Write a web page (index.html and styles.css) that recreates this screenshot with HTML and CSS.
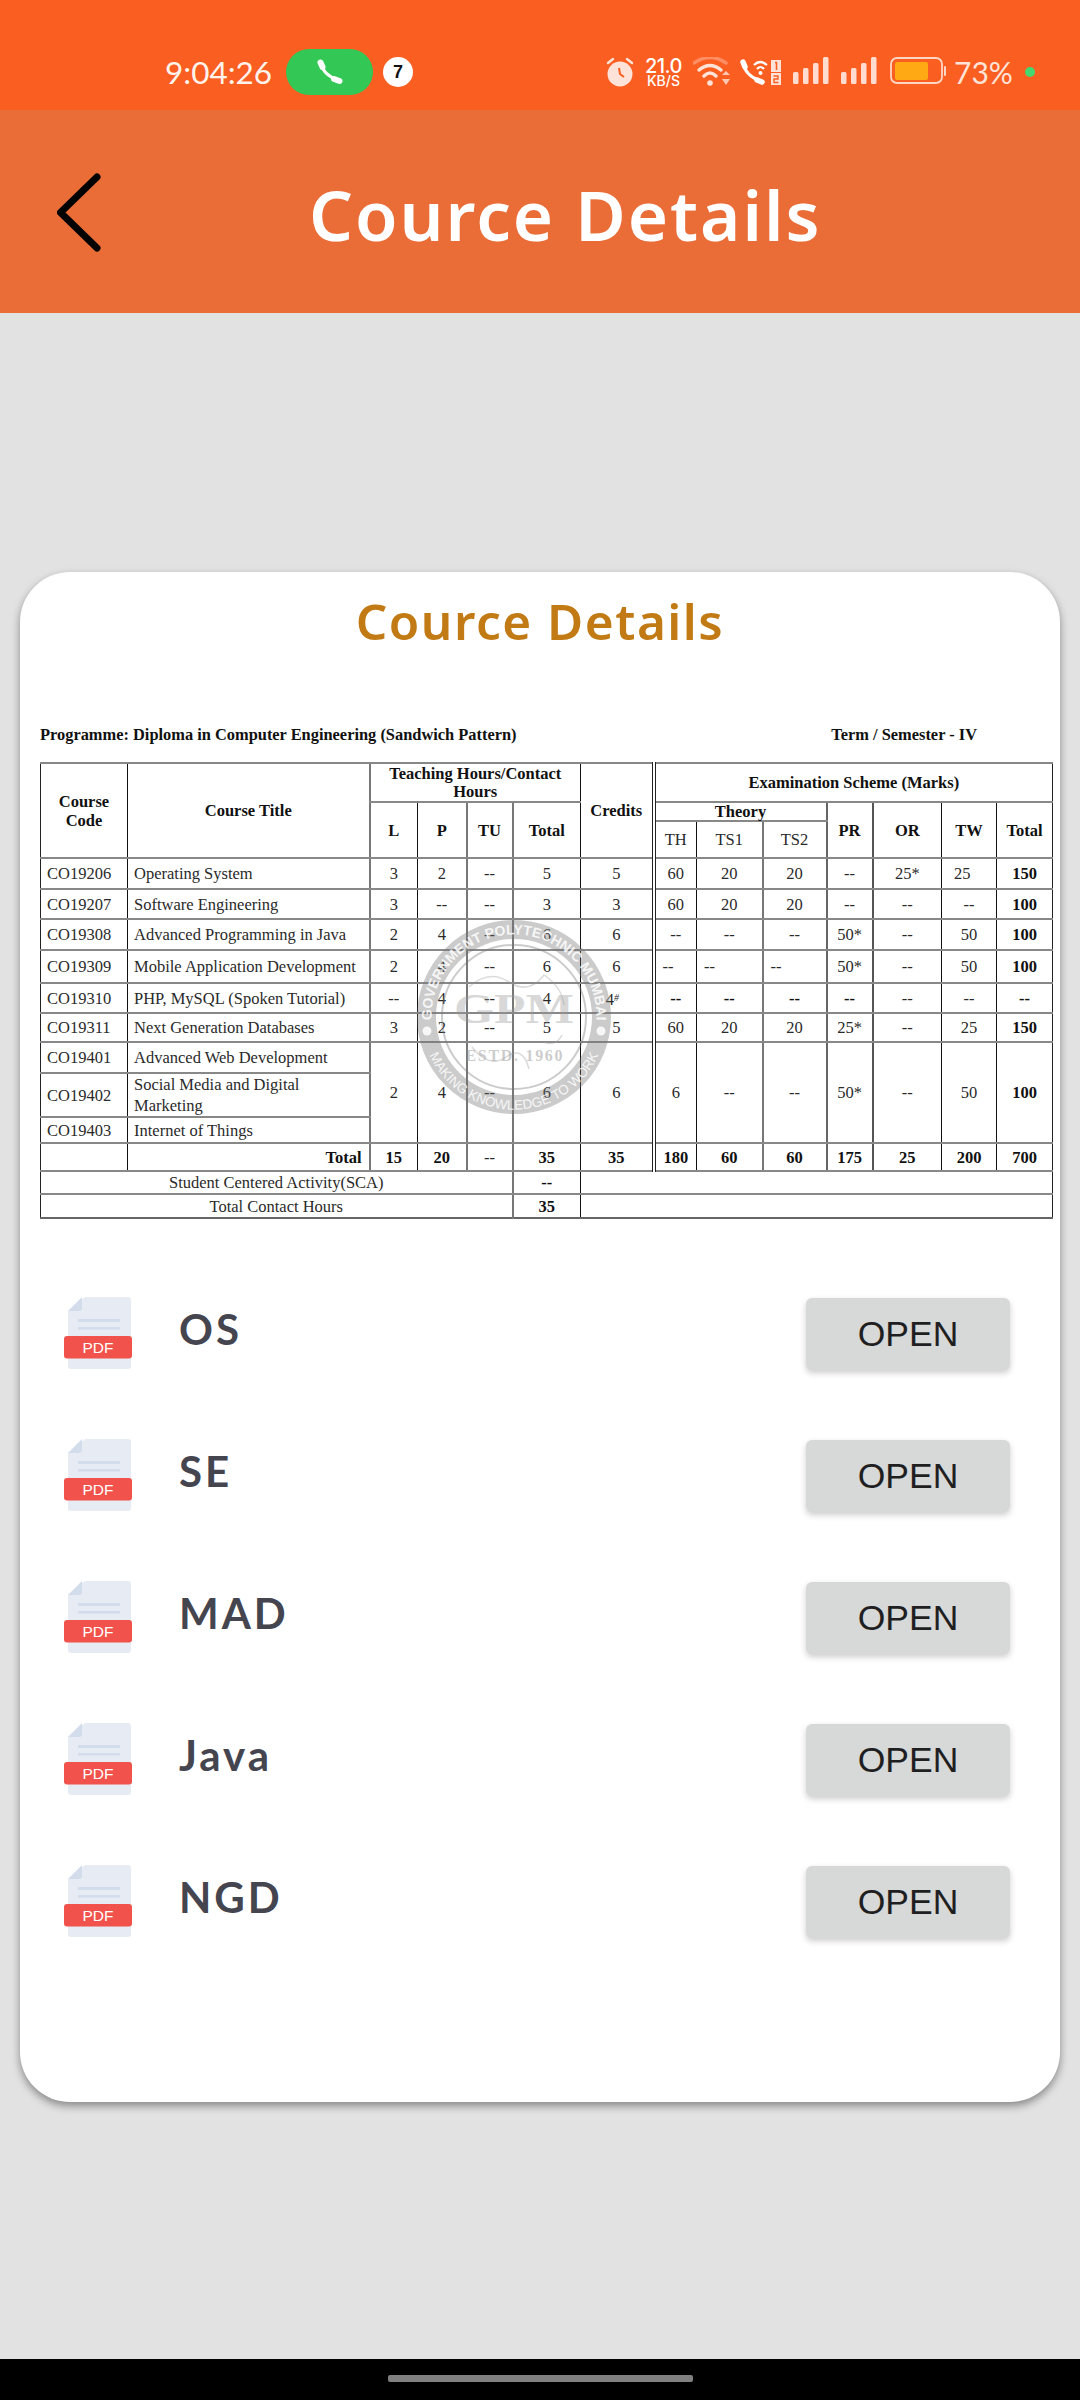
FILE: index.html
```html
<!DOCTYPE html>
<html lang="en">
<head>
<meta charset="utf-8">
<title>Cource Details</title>
<link rel="stylesheet" href="styles.css">
</head>
<body>
<div class="status">
  <div class="status-left">
    <span class="time">9:04:26</span>
    <span class="call-pill">
      <svg class="call-icon" viewBox="0 0 26 26"><path d="M4 4Q6 16 21 21" fill="none" stroke="#fff" stroke-width="3"/><path d="M3.500 3.500L5.500 8M17 20L22.500 22" fill="none" stroke="#fff" stroke-width="6" stroke-linecap="round"/></svg>
    </span>
    <span class="badge">7</span>
  </div>
  <div class="status-right">
    <svg class="alarm" viewBox="0 0 28 30"><circle cx="14" cy="17" r="12.500" fill="#ffe3d8"/><path d="M2 6L7 2M26 6L21 2" stroke="#ffe3d8" stroke-width="2.500" stroke-linecap="round"/><path d="M13 11L14 17L18 20" fill="none" stroke="#fa5e20" stroke-width="2"/></svg>
    <span class="speed"><span class="speed-num">21.0</span><span class="speed-unit">KB/S</span></span>
    <svg class="wifi" viewBox="0 0 38 29"><path d="M1 6Q17 -5 33 6" fill="none" stroke="#ff8d63" stroke-width="3.500" stroke-linecap="round"/><path d="M6 13Q17 4 28 13M11 19Q17 13 23 19" fill="none" stroke="#ffe3d8" stroke-width="3.500" stroke-linecap="round"/><circle cx="17" cy="26" r="2.800" fill="#ffe3d8"/><path d="M29 18L33 14L37 18ZM29 22L37 22L33 28Z" fill="#ffc8b3"/></svg>
    <svg class="volte" viewBox="0 0 41 26"><path d="M3 4Q5 16 20 22" fill="none" stroke="#fff" stroke-width="3"/><path d="M3 3L5 8M17 21L22 23" fill="none" stroke="#fff" stroke-width="5.500" stroke-linecap="round"/><path d="M14 6Q20 0 27 6M17 10Q20.500 6 24 10" fill="none" stroke="#fff" stroke-width="2.200"/><circle cx="20.500" cy="14" r="2" fill="#fff"/><rect x="31" y="1" width="10" height="12" fill="#ffe3d8"/><rect x="31" y="14" width="10" height="12" fill="#ffe3d8"/><path d="M35 3.500H36.500V11" fill="none" stroke="#fa5e20" stroke-width="1.600"/><path d="M33.500 17H38V20H34V23.500H38.500" fill="none" stroke="#fa5e20" stroke-width="1.400"/></svg>
    <svg class="signal" viewBox="0 0 36 28"><rect y="15" width="5.500" height="12" rx="1.500"/><rect x="10" y="11" width="5.500" height="16" rx="1.500"/><rect x="20" y="6" width="5.500" height="21" rx="1.500"/><rect x="30" y="0" width="5.500" height="27" rx="1.500"/></svg>
    <svg class="signal signal-b" viewBox="0 0 36 28"><rect y="15" width="5.500" height="12" rx="1.500"/><rect x="10" y="11" width="5.500" height="16" rx="1.500"/><rect x="20" y="6" width="5.500" height="21" rx="1.500"/><rect x="30" y="0" width="5.500" height="27" rx="1.500"/></svg>
    <svg class="battery" viewBox="0 0 56 28"><rect x="1" y="1" width="51" height="25" rx="6" fill="none" stroke="#ffd5c4" stroke-width="1.800"/><rect x="5" y="5" width="33" height="18" rx="2" fill="#ffa914"/><rect x="54" y="9" width="2" height="10" rx="1" fill="#ffd5c4"/></svg>
    <span class="pct">73%</span>
    <span class="dot"></span>
  </div>
</div>

<header class="appbar">
  <svg class="back" viewBox="0 0 46 80"><path d="M40 5L3.500 40.500L40 76" fill="none" stroke="#000" stroke-width="7" stroke-linecap="round" stroke-linejoin="round"/></svg>
  <h1 class="appbar-title">Cource Details</h1>
</header>

<main class="main">
  <section class="card">
    <h2 class="card-title">Cource Details</h2>
    <div class="sheet">
      <div class="sheet-head">
        <span>Programme: Diploma in Computer Engineering (Sandwich Pattern)</span>
        <span class="term">Term / Semester - IV</span>
      </div>
      <div class="sheet-body">
        <table class="scheme">
          <colgroup>
            <col class="c1"><col class="c2"><col class="c3"><col class="c4"><col class="c5"><col class="c6"><col class="c7"><col class="c8"><col class="c9"><col class="c10"><col class="c11"><col class="c12"><col class="c13"><col class="c14">
          </colgroup>
          <tr class="h39">
            <th rowspan="3">Course<br>Code</th>
            <th rowspan="3">Course Title</th>
            <th colspan="4" class="tight">Teaching Hours/Contact<br>Hours</th>
            <th rowspan="3">Credits</th>
            <th colspan="7">Examination Scheme (Marks)</th>
          </tr>
          <tr class="h19">
            <th rowspan="2">L</th><th rowspan="2">P</th><th rowspan="2">TU</th><th rowspan="2">Total</th>
            <th colspan="3" class="flat">Theory</th>
            <th rowspan="2">PR</th><th rowspan="2">OR</th><th rowspan="2">TW</th><th rowspan="2">Total</th>
          </tr>
          <tr class="h37">
            <td>TH</td><td>TS1</td><td>TS2</td>
          </tr>
          <tr class="h31">
            <td class="code">CO19206</td><td class="name">Operating System</td><td>3</td><td>2</td><td>--</td><td>5</td><td>5</td><td>60</td><td>20</td><td>20</td><td>--</td><td>25*</td><td class="shift">25</td><td class="b">150</td>
          </tr>
          <tr class="h30">
            <td class="code">CO19207</td><td class="name">Software Engineering</td><td>3</td><td>--</td><td>--</td><td>3</td><td>3</td><td>60</td><td>20</td><td>20</td><td>--</td><td>--</td><td>--</td><td class="b">100</td>
          </tr>
          <tr class="h31">
            <td class="code">CO19308</td><td class="name">Advanced Programming in Java</td><td>2</td><td>4</td><td>--</td><td>6</td><td>6</td><td>--</td><td>--</td><td>--</td><td>50*</td><td>--</td><td>50</td><td class="b">100</td>
          </tr>
          <tr class="h33">
            <td class="code">CO19309</td><td class="name">Mobile Application Development</td><td>2</td><td>4</td><td>--</td><td>6</td><td>6</td><td class="left">--</td><td class="left">--</td><td class="left">--</td><td>50*</td><td>--</td><td>50</td><td class="b">100</td>
          </tr>
          <tr class="h30">
            <td class="code">CO19310</td><td class="name">PHP, MySQL (Spoken Tutorial)</td><td>--</td><td>4</td><td>--</td><td>4</td><td class="four">4<i class="hash">#</i></td><td class="b">--</td><td class="b">--</td><td class="b">--</td><td class="b">--</td><td>--</td><td>--</td><td class="b">--</td>
          </tr>
          <tr class="h29">
            <td class="code">CO19311</td><td class="name">Next Generation Databases</td><td>3</td><td>2</td><td>--</td><td>5</td><td>5</td><td>60</td><td>20</td><td>20</td><td>25*</td><td>--</td><td>25</td><td class="b">150</td>
          </tr>
          <tr class="h31">
            <td class="code">CO19401</td><td class="name">Advanced Web Development</td><td rowspan="3">2</td><td rowspan="3">4</td><td rowspan="3">--</td><td rowspan="3">6</td><td rowspan="3">6</td><td rowspan="3">6</td><td rowspan="3">--</td><td rowspan="3">--</td><td rowspan="3">50*</td><td rowspan="3">--</td><td rowspan="3">50</td><td rowspan="3" class="b">100</td>
          </tr>
          <tr class="h44">
            <td class="code">CO19402</td><td class="name two">Social Media and Digital<br>Marketing</td>
          </tr>
          <tr class="h26">
            <td class="code">CO19403</td><td class="name">Internet of Things</td>
          </tr>
          <tr class="h28">
            <td></td><td class="total b">Total</td><td class="b">15</td><td class="b">20</td><td>--</td><td class="b">35</td><td class="b">35</td><td class="b">180</td><td class="b">60</td><td class="b">60</td><td class="b">175</td><td class="b">25</td><td class="b">200</td><td class="b">700</td>
          </tr>
          <tr class="h23">
            <td colspan="5">Student Centered Activity(SCA)</td><td class="b">--</td><td colspan="8"></td>
          </tr>
          <tr class="h24">
            <td colspan="5">Total Contact Hours</td><td class="b">35</td><td colspan="8"></td>
          </tr>
        </table>
        <svg class="seal" viewBox="-97 -97 194 194">
          <defs>
            <path id="seal-top" d="M-82 8A82.400 82.400 0 1 1 82 8"/>
            <path id="seal-bot" d="M-87 32A92.700 92.700 0 0 0 87 32"/>
          </defs>
          <circle r="87.500" fill="none" stroke="#777" stroke-opacity=".38" stroke-width="19"/>
          <circle r="72" fill="none" stroke="#777" stroke-opacity=".38" stroke-width="2"/>
          <circle cx="-87" cy="14" r="4.500" fill="#fff" fill-opacity=".85"/>
          <circle cx="87" cy="14" r="4.500" fill="#fff" fill-opacity=".85"/>
          <text class="seal-ring"><textPath href="#seal-top" startOffset="50%" text-anchor="middle">GOVERNMENT POLYTECHNIC MUMBAI</textPath></text>
          <text class="seal-ring seal-ring-b"><textPath href="#seal-bot" startOffset="50%" text-anchor="middle">MAKING KNOWLEDGE TO WORK</textPath></text>
          <path d="M-45 -30Q-25 -48 -5 -35T30 -42Q48 -30 50 -12M-42 30Q-25 52 -8 40T15 52M30 25Q42 30 48 18" fill="none" stroke="#999" stroke-opacity=".35" stroke-width="1.500"/>
          <text class="seal-gpm" x="0" y="6" text-anchor="middle" textLength="120" lengthAdjust="spacingAndGlyphs">GPM</text>
          <text class="seal-estd" x="0" y="44" text-anchor="middle" textLength="97">ESTD. 1960</text>
        </svg>
      </div>
    </div>

    <ul class="files">
      <li class="file">
        <svg class="pdf" viewBox="0 0 68 72"><path d="M21 0H64A3 3 0 0 1 67 3V69A3 3 0 0 1 64 72H7A3 3 0 0 1 4 69V14Z" fill="#e7ebf3"/><path d="M18 0V11A3 3 0 0 1 15 14H4Z" fill="#d3dcea"/><rect x="14" y="22" width="42" height="3" fill="#d3dcea"/><rect x="14" y="30" width="42" height="2.500" fill="#d3dcea"/><rect x="0" y="39" width="68" height="22.500" rx="3" fill="#f1524c"/><text class="pdf-label" x="34" y="56" text-anchor="middle">PDF</text></svg>
        <span class="file-name">OS</span>
        <button class="open">OPEN</button>
      </li>
      <li class="file">
        <svg class="pdf" viewBox="0 0 68 72"><path d="M21 0H64A3 3 0 0 1 67 3V69A3 3 0 0 1 64 72H7A3 3 0 0 1 4 69V14Z" fill="#e7ebf3"/><path d="M18 0V11A3 3 0 0 1 15 14H4Z" fill="#d3dcea"/><rect x="14" y="22" width="42" height="3" fill="#d3dcea"/><rect x="14" y="30" width="42" height="2.500" fill="#d3dcea"/><rect x="0" y="39" width="68" height="22.500" rx="3" fill="#f1524c"/><text class="pdf-label" x="34" y="56" text-anchor="middle">PDF</text></svg>
        <span class="file-name">SE</span>
        <button class="open">OPEN</button>
      </li>
      <li class="file">
        <svg class="pdf" viewBox="0 0 68 72"><path d="M21 0H64A3 3 0 0 1 67 3V69A3 3 0 0 1 64 72H7A3 3 0 0 1 4 69V14Z" fill="#e7ebf3"/><path d="M18 0V11A3 3 0 0 1 15 14H4Z" fill="#d3dcea"/><rect x="14" y="22" width="42" height="3" fill="#d3dcea"/><rect x="14" y="30" width="42" height="2.500" fill="#d3dcea"/><rect x="0" y="39" width="68" height="22.500" rx="3" fill="#f1524c"/><text class="pdf-label" x="34" y="56" text-anchor="middle">PDF</text></svg>
        <span class="file-name">MAD</span>
        <button class="open">OPEN</button>
      </li>
      <li class="file">
        <svg class="pdf" viewBox="0 0 68 72"><path d="M21 0H64A3 3 0 0 1 67 3V69A3 3 0 0 1 64 72H7A3 3 0 0 1 4 69V14Z" fill="#e7ebf3"/><path d="M18 0V11A3 3 0 0 1 15 14H4Z" fill="#d3dcea"/><rect x="14" y="22" width="42" height="3" fill="#d3dcea"/><rect x="14" y="30" width="42" height="2.500" fill="#d3dcea"/><rect x="0" y="39" width="68" height="22.500" rx="3" fill="#f1524c"/><text class="pdf-label" x="34" y="56" text-anchor="middle">PDF</text></svg>
        <span class="file-name">Java</span>
        <button class="open">OPEN</button>
      </li>
      <li class="file">
        <svg class="pdf" viewBox="0 0 68 72"><path d="M21 0H64A3 3 0 0 1 67 3V69A3 3 0 0 1 64 72H7A3 3 0 0 1 4 69V14Z" fill="#e7ebf3"/><path d="M18 0V11A3 3 0 0 1 15 14H4Z" fill="#d3dcea"/><rect x="14" y="22" width="42" height="3" fill="#d3dcea"/><rect x="14" y="30" width="42" height="2.500" fill="#d3dcea"/><rect x="0" y="39" width="68" height="22.500" rx="3" fill="#f1524c"/><text class="pdf-label" x="34" y="56" text-anchor="middle">PDF</text></svg>
        <span class="file-name">NGD</span>
        <button class="open">OPEN</button>
      </li>
    </ul>
  </section>
</main>

<footer class="navbar"><span class="home-pill"></span></footer>
</body>
</html>
```

FILE: styles.css
```css
* { box-sizing: border-box; }
html, body { margin: 0; padding: 0; }
body {
  width: 1080px;
  height: 2400px;
  overflow: hidden;
  display: flex;
  flex-direction: column;
  background: #e2e2e2;
  font-family: "Noto Sans", sans-serif;
}

/* status bar */
.status {
  height: 110px;
  flex: none;
  background: #fa5e20;
  display: flex;
  align-items: flex-start;
  justify-content: space-between;
  padding: 49px 45px 0 165px;
}
.status-left { display: flex; align-items: center; height: 46px; }
.time { font: 400 31.500px/46px "Lato", sans-serif; color: #fff3ec; width: 121px; }
.call-pill {
  width: 87px; height: 46px; border-radius: 23px; background: #33c756;
  display: flex; align-items: center; justify-content: center;
}
.call-icon { width: 26px; height: 26px; }
.badge {
  width: 30px; height: 30px; border-radius: 50%; background: #fff; margin-left: 10px;
  display: flex; align-items: center; justify-content: center;
  font: 700 18px/30px "Liberation Sans", sans-serif; color: #111;
}
.status-right { display: flex; align-items: flex-start; height: 46px; padding-top: 8px; }
.alarm { width: 28px; height: 30px; margin-right: 10px; }
.speed { display: flex; flex-direction: column; align-items: center; width: 39px; margin-right: 10px; color: #fff; }
.speed-num { font: 500 20px/18px "Inter", sans-serif; letter-spacing: -.5px; }
.speed-unit { font: 500 14px/12px "Inter", sans-serif; }
.wifi { width: 38px; height: 29px; margin-right: 9px; }
.volte { width: 41px; height: 26px; margin: 2px 12px 0 0; }
.signal { width: 36px; height: 28px; fill: #ffdccf; margin-right: 12px; }
.signal-b { margin-right: 13px; }
.battery { width: 56px; height: 28px; margin-right: 8px; }
.pct { font: 400 30px/30px "Lato", sans-serif; color: #ffe3d8; width: 60px; }
.dot { width: 10px; height: 10px; border-radius: 50%; background: #45d870; margin: 10px 0 0 11px; }

/* app bar */
.appbar {
  height: 203px;
  flex: none;
  background: #ea6c36;
  display: flex;
  align-items: center;
  padding-left: 57px;
}
.back { width: 46px; height: 80px; flex: none; }
.appbar-title {
  margin: 0 0 0 206px;
  padding-top: 4px;
  font-size: 69px;
  line-height: 80px;
  font-weight: 600;
  letter-spacing: 2px;
  color: #fff;
}

/* card */
.main { flex: 1; padding: 259px 20px 0; }
.card {
  height: 1530px;
  background: #fff;
  border-radius: 50px;
  box-shadow: 0 4px 8px rgba(0, 0, 0, .4);
  display: flex;
  flex-direction: column;
}
.card-title {
  margin: 0;
  height: 98px;
  text-align: center;
  font-size: 49.500px;
  line-height: 98px;
  font-weight: 600;
  letter-spacing: 1.500px;
  color: #c27a14;
}

/* timetable */
.sheet { margin: 55px 0 0 20px; width: 1012px; }
.sheet-head {
  height: 37px;
  display: flex;
  justify-content: space-between;
  font: 700 16.400px/20px "Liberation Serif", serif;
  color: #111;
}
.term { margin-right: 75px; }
.sheet-body { position: relative; }
.scheme {
  width: 1012px;
  table-layout: fixed;
  border-collapse: collapse;
  border-left: 1.500px solid #222;
  border-right: 1.500px solid #222;
  border-bottom: 2px solid #666;
  font: 400 16.500px/19px "Liberation Serif", serif;
  color: #2a2a2a;
}
.scheme th, .scheme td {
  padding: 0;
  text-align: center;
  vertical-align: middle;
  border-top: 2px solid #888;
}
.scheme th { font-weight: 700; color: #111; }
.scheme .tight { line-height: 18px; }
.scheme .flat { line-height: 16px; }
.c1 { width: 87px; }
.c2 { width: 242px; border-left: 1.500px solid #111; }
.c3 { width: 48px; border-left: 2px solid #777; }
.c4 { width: 49px; border-left: 1.500px solid #111; }
.c5 { width: 46px; border-left: 2px solid #777; }
.c6 { width: 68px; border-left: 2px solid #777; }
.c7 { width: 73px; border-left: 1.500px solid #111; }
.c8 { width: 43px; border-left: 4px double #222; }
.c9 { width: 66px; border-left: 1.500px solid #111; }
.c10 { width: 64px; border-left: 2px solid #777; }
.c11 { width: 46px; border-left: 2px solid #666; }
.c12 { width: 69px; border-left: 2px solid #555; }
.c13 { width: 55px; border-left: 1.500px solid #111; }
.c14 { width: 56px; border-left: 1.500px solid #111; }
.h19 { height: 19px; }
.h23 { height: 23px; }
.h24 { height: 24px; }
.h26 { height: 26px; }
.h28 { height: 28px; }
.h29 { height: 29px; }
.h30 { height: 30px; }
.h31 { height: 31px; }
.h33 { height: 33px; }
.h37 { height: 37px; }
.h39 { height: 39px; }
.h44 { height: 44px; }
.scheme .code, .scheme .name { text-align: left; padding-left: 6px; }
.scheme .two { line-height: 21px; }
.scheme .total { text-align: right; padding-right: 7px; }
.scheme .b { font-weight: 700; color: #111; }
.scheme .left { text-align: left; padding-left: 7px; }
.scheme .shift { text-align: left; padding-left: 12px; }
.scheme .four { padding-right: 8px; }
.hash { font-size: 10px; vertical-align: 4px; }

/* watermark */
.seal { position: absolute; left: 377px; top: 158px; width: 194px; height: 194px; }
.seal-ring { font: 700 14px "Liberation Sans", sans-serif; fill: #fff; fill-opacity: .85; }
.seal-ring-b { font-weight: 400; font-size: 13.500px; }
.seal-gpm { font: 700 42px "Liberation Serif", serif; fill: #999; fill-opacity: .4; }
.seal-estd { font: 700 16px "Liberation Serif", serif; fill: #999; fill-opacity: .5; }

/* file list */
.files {
  list-style: none;
  margin: 78px 0 0;
  padding: 0 50px 0 44px;
  display: flex;
  flex-direction: column;
  gap: 69px;
}
.file { display: flex; align-items: flex-start; height: 73px; }
.pdf { width: 68px; height: 72px; flex: none; }
.pdf-label { font: 400 15.500px "Liberation Sans", sans-serif; fill: #fff; }
.file-name {
  margin-left: 47px;
  flex: 1;
  font-family: "Lato", sans-serif;
  font-size: 42px;
  line-height: 64px;
  font-weight: 700;
  letter-spacing: 3px;
  color: #45454f;
}
.open {
  width: 204px;
  height: 72px;
  margin-top: 1px;
  padding: 0;
  border: 0;
  border-radius: 6px;
  background: #d7d8d8;
  box-shadow: 0 3px 6px rgba(0, 0, 0, .2);
  font: 400 35.500px/72px "Liberation Sans", sans-serif;
  color: #1f1f22;
}

/* navigation bar */
.navbar {
  height: 41px;
  flex: none;
  background: #000;
  display: flex;
  justify-content: center;
  padding-top: 16px;
}
.home-pill { width: 305px; height: 7px; border-radius: 2px; background: #808080; }
```
